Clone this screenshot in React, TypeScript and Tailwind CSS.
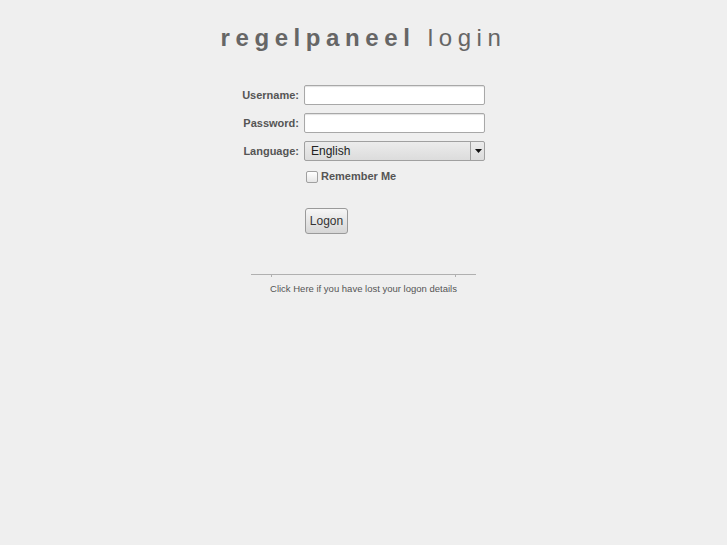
export default function App() {
  return (
    <div className="min-h-[545px] w-full bg-[#efefef] font-['Liberation_Sans',Arial,sans-serif] text-[#555]">
      <div className="flex flex-col items-center pt-[24px]">
        {/* Title */}
        <h1 className="h-[28px] text-[24px] leading-[28px] tracking-[5.6px] text-[#666]">
          <span className="font-bold">regelpaneel</span> login
        </h1>

        {/* Form */}
        <form className="mt-[33px] grid w-[253px] grid-cols-[62px_1fr] gap-x-[5px] gap-y-[8px] pr-[5px]">
          <label className="flex h-[20px] items-center justify-end text-[11px] font-bold text-[#555]">Username:</label>
          <input
            type="text"
            className="block h-[20px] w-[181px] rounded-[2px] border border-[#a8a8a8] bg-white px-1 text-[12px] shadow-[inset_0_1px_1px_rgba(0,0,0,0.12)] outline-none"
          />

          <label className="flex h-[20px] items-center justify-end text-[11px] font-bold text-[#555]">Password:</label>
          <input
            type="password"
            className="block h-[20px] w-[181px] rounded-[2px] border border-[#a8a8a8] bg-white px-1 text-[12px] shadow-[inset_0_1px_1px_rgba(0,0,0,0.12)] outline-none"
          />

          <label className="flex h-[20px] items-center justify-end text-[11px] font-bold text-[#555]">Language:</label>
          <div className="relative h-[20px] w-[181px]">
            <select className="block h-[20px] w-full appearance-none rounded-[2px] border border-[#a0a0a0] bg-gradient-to-b from-[#ececec] to-[#dcdcdc] pl-[6px] text-[12px] leading-[18px] text-[#222] outline-none">
              <option>English</option>
            </select>
            <div className="pointer-events-none absolute right-0 top-0 flex h-[20px] w-[15px] items-center justify-center border-l border-[#a0a0a0]">
              <svg width="7" height="4" viewBox="0 0 7 4">
                <path d="M0 0h7L3.5 4z" fill="#111" />
              </svg>
            </div>
          </div>

          <div className="mt-[1px]" />
          <label className="ml-[2px] mt-[1px] flex h-[13px] items-center gap-[3px] text-[11px] font-bold text-[#555]">
            <input
              type="checkbox"
              className="h-[12px] w-[12px] appearance-none rounded-[2px] border border-[#a0a0a0] bg-gradient-to-b from-white to-[#e6e6e6]"
            />
            Remember Me
          </label>

          <div />
          <div className="mt-[17px]">
            <button
              type="button"
              className="ml-[1px] h-[26px] w-[43px] rounded-[3px] border border-[#9a9a9a] bg-gradient-to-b from-[#f6f6f6] to-[#d6d6d6] text-[12px] text-[#333]"
            >
              Logon
            </button>
          </div>
        </form>

        {/* Footer */}
        <div className="mt-[40px] w-[225px] border-t border-[#b0b0b0]">
          <div className="mx-[20px] h-[2px] border-x border-[#b0b0b0]" />
          <p className="mt-[6px] text-center text-[9.5px] leading-[12px] text-[#555]">
            Click Here if you have lost your logon details
          </p>
        </div>
      </div>
    </div>
  );
}
